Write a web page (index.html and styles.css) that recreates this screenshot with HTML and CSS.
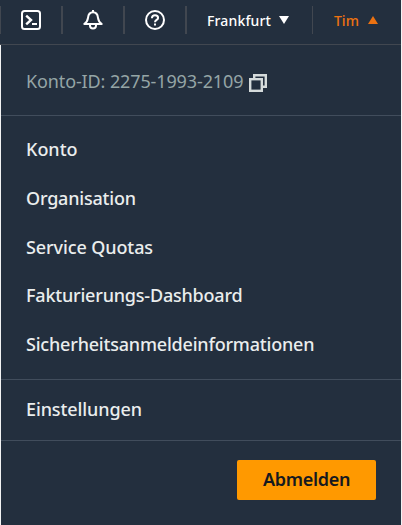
FILE: index.html
```html
<!DOCTYPE html>
<html lang="de">
<head>
<meta charset="utf-8">
<title>Konto</title>
<link rel="stylesheet" href="styles.css">
</head>
<body>
<div class="console">
  <header class="topbar">
    <span class="edge"></span>
    <button class="tool" aria-label="CloudShell">
      <svg width="20" height="20" viewBox="0 0 20 20" fill="none" stroke="#fff" stroke-width="2"><rect x="1" y="1" width="18" height="18" rx="2.5"/><path d="M5.200 5.700 10 10l-4.800 4.300" stroke-width="2.400"/><path d="M11 14h5"/></svg>
    </button>
    <button class="tool" aria-label="Benachrichtigungen">
      <svg width="20" height="20" viewBox="0 0 20 20" fill="none" stroke="#fff" stroke-width="2" stroke-linejoin="round"><path d="M10 0v2M1.300 14h17.400c-2.200-1.500-3.300-3.200-3.700-6.200C14.600 4.200 12.700 2.300 10 2.300S5.400 4.200 5 7.800c-.4 3-1.500 4.700-3.700 6.200Z"/><path d="M7 14v1.500a3 3 0 0 0 6 0V14"/></svg>
    </button>
    <button class="tool" aria-label="Hilfe">
      <svg width="20" height="20" viewBox="0 0 20 20" fill="none" stroke="#fff" stroke-width="2"><circle cx="10" cy="10" r="9"/><path d="M6.900 8.200C7 6.300 8.200 5.300 10 5.300c1.900 0 3.100 1 3.100 2.600 0 2-3.100 2.100-3.100 4.300"/><path d="M10 13.400v2.200"/></svg>
    </button>
    <button class="region"><span class="region-name">Frankfurt</span><svg width="10" height="8" viewBox="0 0 10 8"><path d="M0 0h10L5 8Z" fill="#fff"/></svg></button>
    <button class="user"><span class="user-name">Tim</span><svg width="10" height="8" viewBox="0 0 10 8"><path d="M0 8h10L5 0Z" fill="#ec7211"/></svg></button>
  </header>
  <main class="panel">
    <div class="account"><span class="account-id">Konto-ID: 2275-1993-2109</span>
      <svg class="copy" width="18" height="18" viewBox="0 0 18 18" fill="none" stroke="#d5dbdb" stroke-width="2.400"><path d="M5.200 5V1.200h11.600v11.600H13"/><rect x="1.200" y="5.200" width="11.600" height="11.600"/></svg>
    </div>
    <nav class="links">
      <a>Konto</a>
      <a class="tight">Organisation</a>
      <a class="snug">Service Quotas</a>
      <a class="tight">Fakturierungs-Dashboard</a>
      <a class="tight">Sicherheitsanmeldeinformationen</a>
    </nav>
    <div class="settings snug">Einstellungen</div>
    <div class="actions"><button class="signout">Abmelden</button></div>
  </main>
</div>
</body>
</html>
```
FILE: styles.css
```css
* { box-sizing: border-box; }
body { margin: 0; background: #f2f3f3; font-family: "Noto Sans", "Open Sans", sans-serif; }
.console { width: 401px; height: 525px; background: #232f3e; display: flex; flex-direction: column; overflow: hidden; }
button { border: 0; background: none; padding: 0; margin: 0; font: inherit; color: inherit; }
svg { display: block; flex: none; }
span { white-space: nowrap; }
.topbar { height: 45px; flex: none; display: flex; padding-top: 6px; border-bottom: 1px solid #414750; }
.edge { width: 1px; height: 28px; background: #414750; }
.tool { width: 62px; height: 28px; display: flex; align-items: center; justify-content: center; border-right: 2px solid #414750; }
.region, .user { height: 28px; display: flex; align-items: center; color: #fff; font-size: 14px; font-weight: 500; }
.region { width: 126px; padding-left: 20px; border-right: 1px solid #414750; }
.region-name { width: 72px; text-align: left; letter-spacing: 0.15px; }
.user { padding-left: 21px; color: #ec7211; }
.user-name { width: 34px; text-align: left; }
.panel { flex: 1; border-left: 1px solid #f2f3f3; color: #eaeded; font-size: 18px; line-height: 26px; font-weight: 500; }
.account { height: 71px; display: flex; align-items: center; padding: 4px 0 0 25px; border-bottom: 1px solid #414d5c; color: #95a5a6; font-weight: 400; }
.account-id { width: 223px; letter-spacing: -0.12px; padding-bottom: 2px; }
.copy { margin-top: 2px; }
.links { height: 264px; padding: 9px 25px 0; border-bottom: 1px solid #414d5c; }
.links a { display: flex; align-items: center; height: 48.700px; }
.tight { letter-spacing: -0.2px; }
.snug { letter-spacing: -0.1px; }
.settings { height: 61px; display: flex; align-items: center; padding: 0 0 2px 25px; border-bottom: 1px solid #414d5c; }
.actions { display: flex; justify-content: flex-end; padding: 19px 25px 0; }
.signout { width: 139px; height: 40px; padding-bottom: 3px; border-radius: 2px; background: #ff9900; color: #16191f; font-weight: 600; letter-spacing: -0.3px; }
```
